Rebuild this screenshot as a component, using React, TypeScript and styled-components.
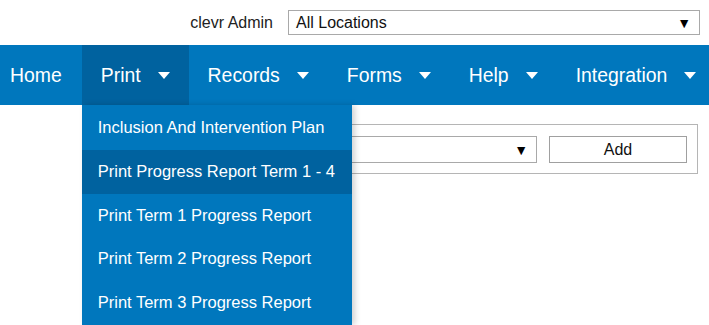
import React from "react";
import { styled, createGlobalStyle } from "styled-components";

const GlobalStyle = createGlobalStyle`
  html, body {
    margin: 0;
    padding: 0;
    background: #fff;
    font-family: "Liberation Sans", Arial, sans-serif;
  }
`;

const Page = styled.div`
  position: relative;
  width: 709px;
  height: 325px;
  overflow: hidden;
`;

const TopBar = styled.div`
  display: flex;
  justify-content: flex-end;
  align-items: center;
  gap: 15px;
  height: 45px;
  padding: 0 9px 0 0;
  box-sizing: border-box;
  color: #222;
  font-size: 16px;
`;

const Select = styled.div<{ $width?: number }>`
  display: flex;
  align-items: center;
  justify-content: space-between;
  box-sizing: border-box;
  width: ${(p) => (p.$width ? `${p.$width}px` : "auto")};
  flex: ${(p) => (p.$width ? "none" : "1")};
  height: ${(p) => (p.$width ? 25 : 27)}px;
  padding: 0 8px 0 7px;
  border: 1px solid #a9a9a9;
  background: #fff;
  color: #111;
  font-size: 16px;
`;

const Arrow = styled.span`
  font-size: 14px;
  color: #000;
`;

const NavBar = styled.nav`
  display: flex;
  height: 60px;
  background: #0077bd;
`;

const NavItem = styled.div<{ $active?: boolean; $first?: boolean }>`
  position: relative;
  display: flex;
  align-items: center;
  gap: 17px;
  padding: ${(p) => (p.$first ? "0 20px 0 10px" : "0 19px")};
  background: ${(p) => (p.$active ? "#00629f" : "transparent")};
  color: #fff;
  font-size: 19.4px;
`;

const Caret = styled.span`
  width: 0;
  height: 0;
  border-left: 6.5px solid transparent;
  border-right: 6.5px solid transparent;
  border-top: 7px solid #fff;
  margin-top: 1px;
`;

const Menu = styled.div`
  position: absolute;
  top: 60px;
  left: 0;
  width: 270px;
  background: #0077bd;
  box-shadow: 3px 0 6px rgba(0, 0, 0, 0.18);
  z-index: 5;
`;

const MenuItem = styled.div<{ $active?: boolean }>`
  padding: 12px 16px;
  line-height: 19.75px;
  font-size: 16.5px;
  color: #fff;
  white-space: nowrap;
  background: ${(p) => (p.$active ? "#00629f" : "transparent")};
  &:first-child {
    padding-top: 13px;
  }
`;

const Content = styled.div`
  padding: 19px 11px 0 150px;
`;

const AddBox = styled.div`
  display: flex;
  gap: 12px;
  padding: 11px 10px 10px 12px;
  border: 1px solid #b5b5b5;
`;

const Button = styled.div`
  display: flex;
  align-items: center;
  justify-content: center;
  width: 138px;
  height: 27px;
  box-sizing: border-box;
  border: 1px solid #a0a0a0;
  background: #fff;
  color: #111;
  font-size: 16px;
`;

const nav = [
  { label: "Home" },
  { label: "Print", caret: true, active: true },
  { label: "Records", caret: true },
  { label: "Forms", caret: true },
  { label: "Help", caret: true },
  { label: "Integration", caret: true },
];

const printItems = [
  "Inclusion And Intervention Plan",
  "Print Progress Report Term 1 - 4",
  "Print Term 1 Progress Report",
  "Print Term 2 Progress Report",
  "Print Term 3 Progress Report",
];

export default function App() {
  return (
    <Page>
      <GlobalStyle />
      <TopBar>
        <span>clevr Admin</span>
        <Select $width={412}>
          <span>All Locations</span>
          <Arrow>▼</Arrow>
        </Select>
      </TopBar>
      <NavBar>
        {nav.map((n, i) => (
          <NavItem key={n.label} $active={n.active} $first={i === 0}>
            <span>{n.label}</span>
            {n.caret && <Caret />}
            {n.active && (
              <Menu>
                {printItems.map((item, j) => (
                  <MenuItem key={item} $active={j === 1}>
                    {item}
                  </MenuItem>
                ))}
              </Menu>
            )}
          </NavItem>
        ))}
      </NavBar>
      <Content>
        <AddBox>
          <Select>
            <span />
            <Arrow>▼</Arrow>
          </Select>
          <Button>Add</Button>
        </AddBox>
      </Content>
    </Page>
  );
}
